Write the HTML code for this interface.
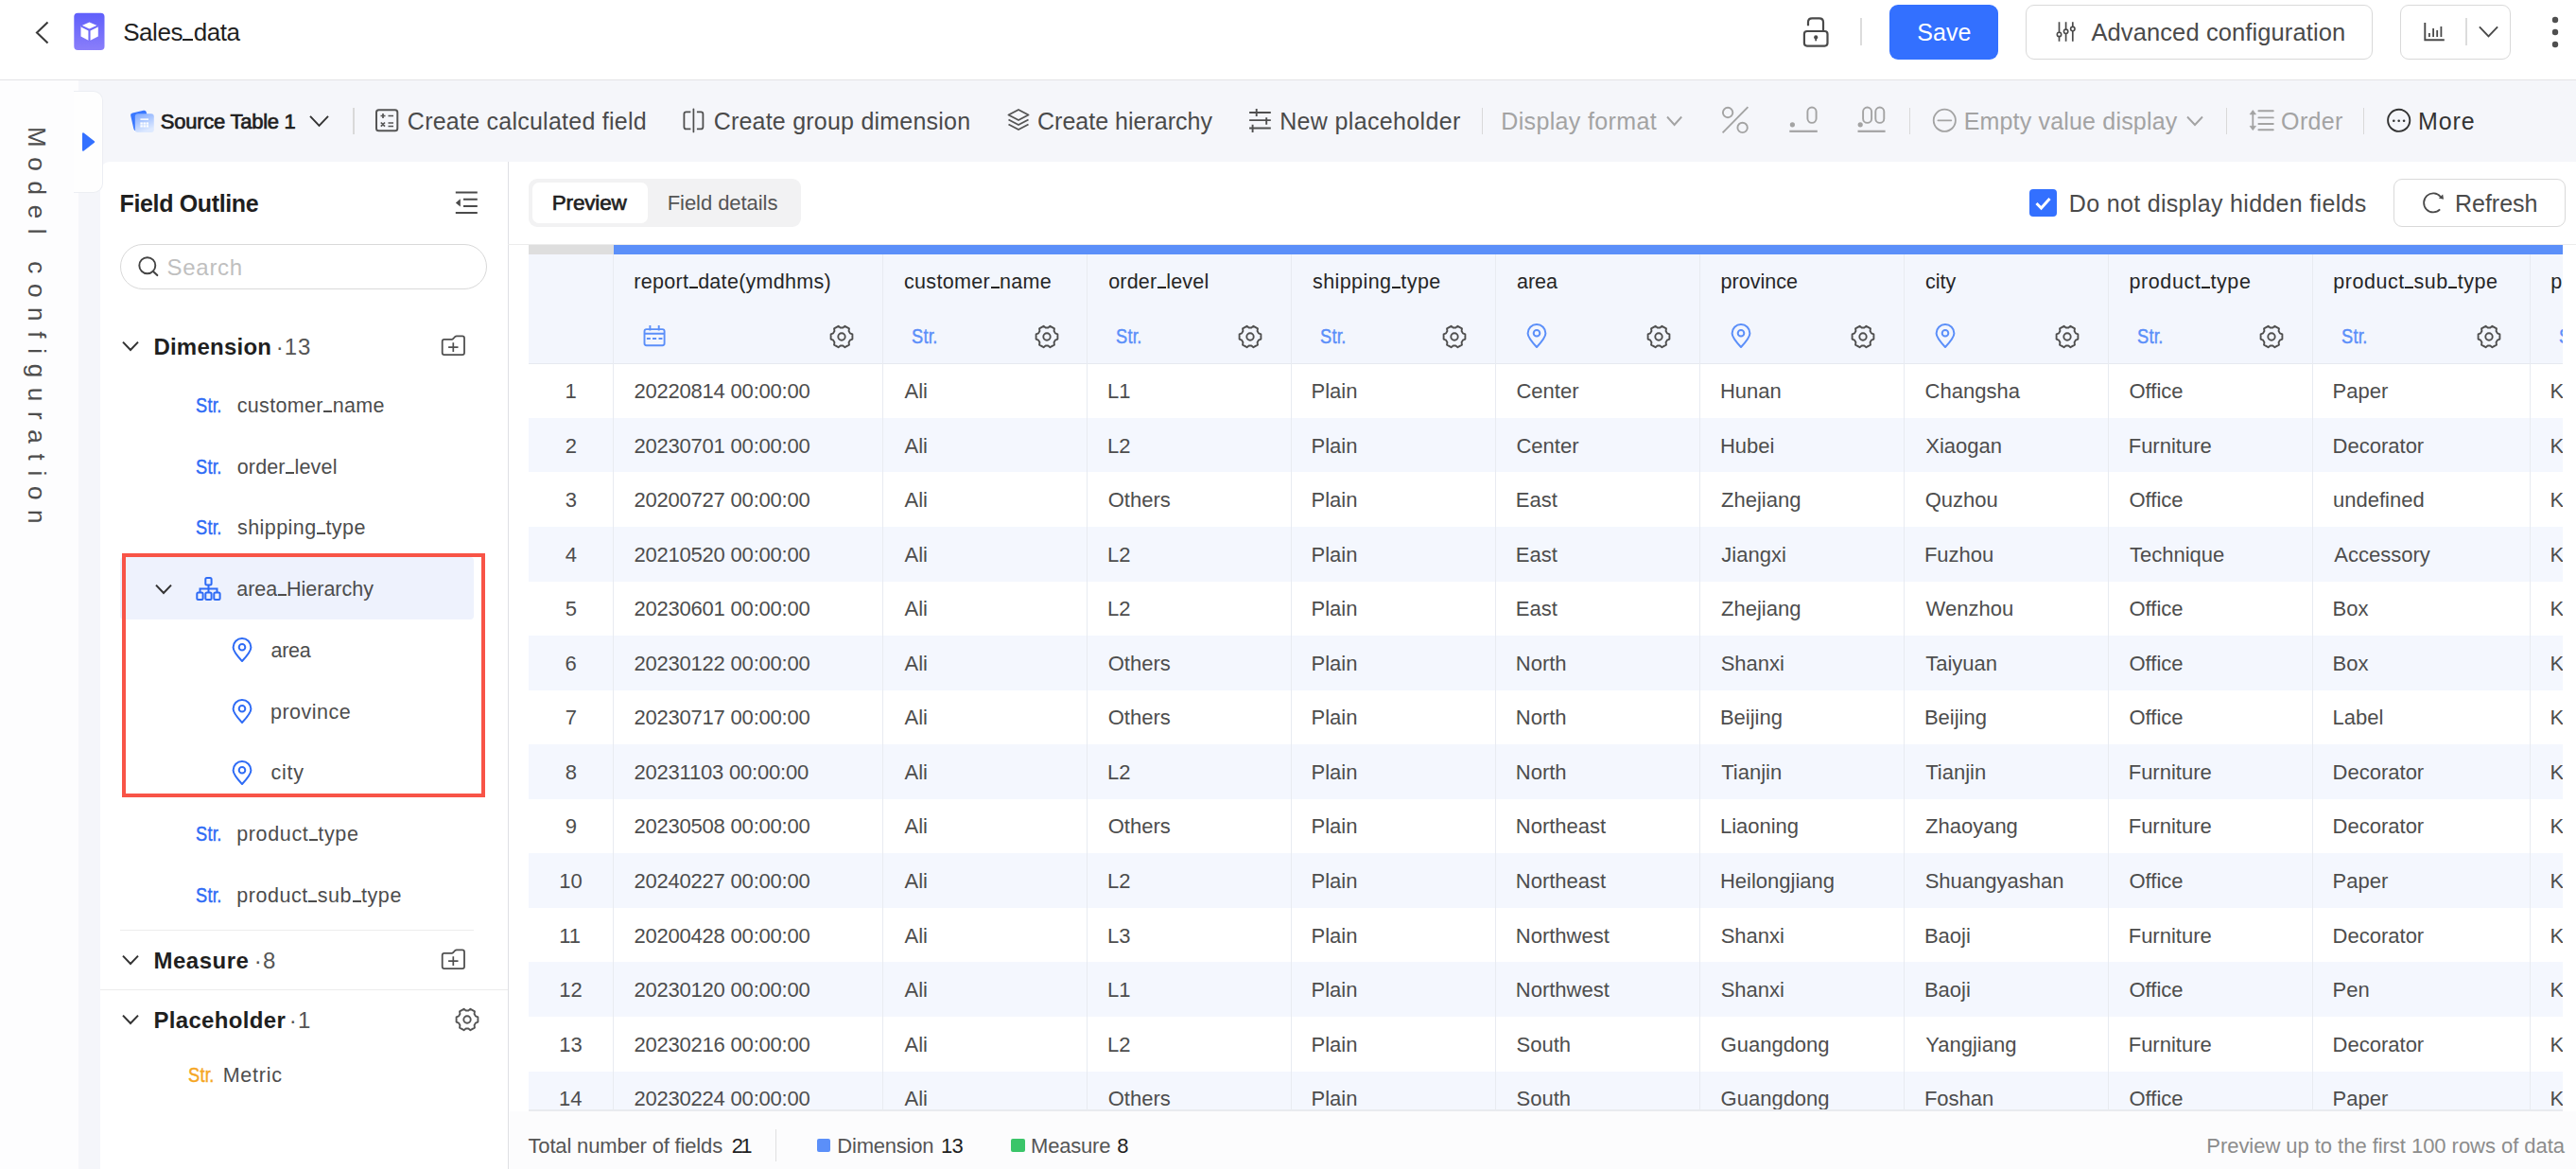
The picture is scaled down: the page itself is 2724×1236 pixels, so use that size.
<!DOCTYPE html>
<html><head><meta charset="utf-8"><style>
html,body{margin:0;padding:0}
body{width:2724px;height:1236px;position:relative;overflow:hidden;background:#fff;font-family:"Liberation Sans",sans-serif}
.a{position:absolute}
.t{position:absolute;white-space:nowrap;line-height:1;font-family:"Liberation Sans",sans-serif}
svg.a{overflow:visible}
.us{display:inline-block;width:0.42em;height:0.085em;background:currentColor;margin:0 0.02em}
</style></head><body>
<div class="a" style="left:0px;top:0px;width:2724px;height:84px;background:#ffffff"></div>
<div class="a" style="left:0px;top:84px;width:2724px;height:1px;background:#e3e3e6"></div>
<div class="a" style="left:0px;top:85px;width:83px;height:1151px;background:#fdfdfe"></div>
<div class="a" style="left:83px;top:85px;width:2641px;height:1151px;background:#f5f6fa"></div>
<div class="a" style="left:106px;top:171px;width:2618px;height:1065px;background:#ffffff;border-top-left-radius:10px"></div>
<div class="a" style="left:537px;top:171px;width:1px;height:1065px;background:#dfe0e4"></div>
<div class="a" style="left:78px;top:96px;width:31px;height:108px;background:#fefefe;border-radius:0 10px 10px 0;border:1px solid #eceef3;border-left:none;box-sizing:border-box"></div>
<svg class="a" style="left:30px;top:18px;" width="30" height="34" viewBox="0 0 30 34" fill="none"><polyline points="20.5,5.6 9,16.5 20.5,27.4" stroke="#3a3a3a" stroke-width="2.1" fill="none"/></svg>
<svg class="a" style="left:78px;top:13px" width="33" height="41" viewBox="0 0 33 41">
<defs><linearGradient id="lg" x1="0" y1="0" x2="0" y2="1"><stop offset="0" stop-color="#5f5ffb"/><stop offset="1" stop-color="#8a7efa"/></linearGradient></defs>
<rect x="0.3" y="0.7" width="32.2" height="39.3" rx="4" fill="url(#lg)"/>
<path d="M16.5 10.6 L25.8 14.4 L25.8 25.6 L16.5 30.3 L7.5 25.6 L7.5 14.4 Z" fill="#fff"/>
<path d="M7.6 14.4 L16.5 18.8 L25.7 14.4 M16.5 18.8 L16.5 30.5" stroke="#6f69f8" stroke-width="2.1" fill="none"/>
</svg>
<div class="t" style="left:130.22px;top:21px;font-size:26px;color:#1f1f1f;letter-spacing:-0.469px;">Sales<span class="us"></span>data</div>
<svg class="a" style="left:1900px;top:14px;" width="40" height="40" viewBox="0 0 40 40" fill="none"><rect x="7.9" y="19" width="24.6" height="15.6" rx="3" stroke="#4a4a4a" stroke-width="2.2"/><path d="M12 13.2 V9.6 Q12 5.4 16.2 5.4 H23.8 Q28 5.4 28 9.6 V19" stroke="#4a4a4a" stroke-width="2.2" fill="none"/><circle cx="20.2" cy="25.4" r="2.1" fill="#4a4a4a"/><rect x="19.3" y="25.5" width="1.8" height="3.8" fill="#4a4a4a"/></svg>
<div class="a" style="left:1967px;top:19px;width:2px;height:29px;background:#dcdcdc"></div>
<div class="a" style="left:1998px;top:5px;width:115px;height:58px;background:#3370ff;border-radius:9px"></div>
<div class="t" style="left:2027.16px;top:22px;font-size:25px;color:#ffffff;letter-spacing:0.121px;">Save</div>
<div class="a" style="left:2142px;top:5px;width:367px;height:58px;border:1.5px solid #d9d9d9;border-radius:9px;box-sizing:border-box;background:#fff"></div>
<svg class="a" style="left:2170px;top:18px;" width="30" height="30" viewBox="0 0 30 30" fill="none"><path d="M7.5 5.3 V25.8 M14.6 5.3 V25.8 M21.8 5.3 V25.8" stroke="#4a4a4a" stroke-width="1.7"/><circle cx="7.5" cy="18.4" r="2.2" fill="#fff" stroke="#4a4a4a" stroke-width="1.6"/><circle cx="14.6" cy="15.3" r="2.2" fill="#fff" stroke="#4a4a4a" stroke-width="1.6"/><circle cx="21.8" cy="12.6" r="2.2" fill="#fff" stroke="#4a4a4a" stroke-width="1.6"/></svg>
<div class="t" style="left:2211.45px;top:22px;font-size:25.5px;color:#4a4a4a;letter-spacing:0.104px;">Advanced configuration</div>
<div class="a" style="left:2538px;top:5px;width:117px;height:58px;border:1.5px solid #d9d9d9;border-radius:9px;box-sizing:border-box;background:#fff"></div>
<svg class="a" style="left:2560px;top:20px;" width="30" height="28" viewBox="0 0 30 28" fill="none"><path d="M4.3 4 V22.2 H24.8" stroke="#4a4a4a" stroke-width="1.9" fill="none"/><path d="M8.9 19 V15 M13.1 19 V10.1 M17.2 19 V12 M21.4 19 V7.9" stroke="#4a4a4a" stroke-width="1.8"/></svg>
<div class="a" style="left:2607px;top:19px;width:2px;height:29px;background:#dcdcdc"></div>
<svg class="a" style="left:2616px;top:22px;" width="30" height="24" viewBox="0 0 30 24" fill="none"><polyline points="5.9,6.3 15.5,16.3 25.1,6.3" stroke="#4a4a4a" stroke-width="1.9" fill="none"/></svg>
<svg class="a" style="left:2694px;top:14px;" width="16" height="42" viewBox="0 0 16 42" fill="none"><circle cx="8" cy="7" r="3.2" fill="#4f4f4f"/><circle cx="8" cy="20" r="3.2" fill="#4f4f4f"/><circle cx="8" cy="33" r="3.2" fill="#4f4f4f"/></svg>
<svg class="a" style="left:136px;top:113px" width="30" height="30" viewBox="0 0 30 30">
<defs><linearGradient id="sg" x1="0" y1="0" x2="0.4" y2="1"><stop offset="0" stop-color="#7ea8ff"/><stop offset="1" stop-color="#dde9ff"/></linearGradient></defs>
<rect x="3.6" y="5" width="17" height="19" rx="2.5" transform="rotate(-13 12 14.5)" fill="#3a78ff"/>
<rect x="6.8" y="7.2" width="20" height="19.8" rx="3" fill="url(#sg)"/>
<rect x="12.4" y="12.4" width="8.6" height="1.5" fill="#fff"/><rect x="12.4" y="16.4" width="2.4" height="2.2" fill="#fff"/><rect x="15.5" y="16.4" width="2.4" height="2.2" fill="#fff"/><rect x="18.6" y="16.4" width="2.4" height="2.2" fill="#fff"/><rect x="12.4" y="19.3" width="2.4" height="2.2" fill="#fff"/><rect x="15.5" y="19.3" width="2.4" height="2.2" fill="#fff"/><rect x="18.6" y="19.3" width="2.4" height="2.2" fill="#fff"/>
</svg>
<div class="t" style="left:169.80px;top:118px;font-size:22px;color:#1f1f1f;letter-spacing:-0.256px;-webkit-text-stroke:0.7px #1f1f1f">Source Table 1</div>
<svg class="a" style="left:322px;top:115px;" width="30" height="25" viewBox="0 0 30 25" fill="none"><polyline points="6,7.8 15.5,17.8 25,7.8" stroke="#333" stroke-width="1.9" fill="none"/></svg>
<div class="a" style="left:373px;top:114px;width:1.5px;height:28px;background:#d9d9d9"></div>
<svg class="a" style="left:395px;top:113px;" width="29" height="29" viewBox="0 0 29 29" fill="none"><rect x="3" y="3.3" width="22.3" height="22" rx="2.5" stroke="#555" stroke-width="2"/><path d="M7.5 9.5 H12.5 M10 7 V12 M15.5 9.5 H21 M7.8 16.5 L12 20.7 M12 16.5 L7.8 20.7 M15.5 17 H21 M15.5 20.5 H21" stroke="#555" stroke-width="1.7"/></svg>
<div class="t" style="left:430.83px;top:116px;font-size:25px;color:#4a4a4a;letter-spacing:0.246px;">Create calculated field</div>
<svg class="a" style="left:718px;top:112px;" width="30" height="30" viewBox="0 0 30 30" fill="none"><path d="M12.4 6.3 H7.6 Q5.4 6.3 5.4 8.5 V22.2 Q5.4 24.4 7.6 24.4 H12.4 M18.9 6.3 H23.2 Q25.4 6.3 25.4 8.5 V22.2 Q25.4 24.4 23.2 24.4 H18.9" stroke="#4f4f4f" stroke-width="1.8" fill="none"/><path d="M15.4 3.4 V27.5" stroke="#4f4f4f" stroke-width="1.7" stroke-linecap="round"/></svg>
<div class="t" style="left:754.63px;top:116px;font-size:25px;color:#4a4a4a;letter-spacing:0.222px;">Create group dimension</div>
<svg class="a" style="left:1062px;top:112px;" width="30" height="30" viewBox="0 0 30 30" fill="none"><path d="M15 4 L25.5 9.5 L15 15 L4.5 9.5 Z" stroke="#555" stroke-width="1.9" fill="none" stroke-linejoin="round"/><path d="M4.5 14.5 L15 20 L25.5 14.5 M4.5 19.5 L15 25 L25.5 19.5" stroke="#555" stroke-width="1.9" fill="none" stroke-linejoin="round"/></svg>
<div class="t" style="left:1097.03px;top:116px;font-size:25px;color:#4a4a4a;letter-spacing:0.008px;">Create hierarchy</div>
<svg class="a" style="left:1318px;top:112px;" width="30" height="30" viewBox="0 0 30 30" fill="none"><path d="M3.1 7 H25.8 M3.1 15.1 H25.8 M3.1 23.5 H25.8" stroke="#4f4f4f" stroke-width="1.9"/><path d="M10.7 2.9 V11 M21.2 12.2 V19.8 M6.6 19.8 V27.9" stroke="#4f4f4f" stroke-width="1.9"/></svg>
<div class="t" style="left:1353.15px;top:116px;font-size:25px;color:#4a4a4a;letter-spacing:0.353px;">New placeholder</div>
<div class="a" style="left:1566.5px;top:114px;width:1.5px;height:28px;background:#d9d9d9"></div>
<div class="t" style="left:1587.25px;top:116px;font-size:25px;color:#a3a3a3;letter-spacing:0.351px;">Display format</div>
<svg class="a" style="left:1758px;top:115px;" width="26" height="25" viewBox="0 0 26 25" fill="none"><polyline points="5,8.5 12.6,17 20.2,8.5" stroke="#a3a3a3" stroke-width="1.9" fill="none"/></svg>
<svg class="a" style="left:1816px;top:110px;" width="38" height="34" viewBox="0 0 38 34" fill="none"><circle cx="11.1" cy="9" r="5.2" stroke="#a3a3a3" stroke-width="1.9"/><circle cx="26.6" cy="24.9" r="5.2" stroke="#a3a3a3" stroke-width="1.9"/><path d="M5.6 30.3 L32.4 3.2" stroke="#a3a3a3" stroke-width="1.9"/></svg>
<svg class="a" style="left:1888px;top:115px;" width="38" height="29" viewBox="0 0 38 29" fill="none"><circle cx="7.4" cy="16.8" r="2.6" fill="#a3a3a3"/><rect x="23.4" y="-1.5" width="9.2" height="16.4" rx="4.6" stroke="#a3a3a3" stroke-width="1.9"/><path d="M4.3 23.8 H33.8" stroke="#a3a3a3" stroke-width="2.2"/></svg>
<svg class="a" style="left:1960px;top:115px;" width="38" height="29" viewBox="0 0 38 29" fill="none"><circle cx="7.2" cy="16.8" r="2.6" fill="#a3a3a3"/><rect x="10.1" y="-1.5" width="9" height="16.4" rx="4.5" stroke="#a3a3a3" stroke-width="1.9"/><rect x="23.3" y="-1.5" width="9" height="16.4" rx="4.5" stroke="#a3a3a3" stroke-width="1.9"/><path d="M4.5 23.8 H33.6" stroke="#a3a3a3" stroke-width="2.2"/></svg>
<div class="a" style="left:2018.5px;top:114px;width:1.5px;height:28px;background:#d9d9d9"></div>
<svg class="a" style="left:2040px;top:112px;" width="32" height="30" viewBox="0 0 32 30" fill="none"><circle cx="16.3" cy="15.3" r="11.6" stroke="#a3a3a3" stroke-width="1.8"/><path d="M9.4 15.3 H23.3" stroke="#a3a3a3" stroke-width="1.8" stroke-linecap="round"/></svg>
<div class="t" style="left:2076.65px;top:116px;font-size:25px;color:#a3a3a3;letter-spacing:0.182px;">Empty value display</div>
<svg class="a" style="left:2308px;top:115px;" width="26" height="25" viewBox="0 0 26 25" fill="none"><polyline points="5,8.5 13,17 21,8.5" stroke="#a3a3a3" stroke-width="1.9" fill="none"/></svg>
<div class="a" style="left:2353.8px;top:114px;width:1.5px;height:28px;background:#d9d9d9"></div>
<svg class="a" style="left:2375px;top:112px;" width="33" height="30" viewBox="0 0 33 30" fill="none"><path d="M7.3 8 V22" stroke="#a3a3a3" stroke-width="1.8"/><path d="M7.3 4.5 L4 8.9 H10.6 Z M7.3 25.7 L4 21.3 H10.6 Z" fill="#a3a3a3" stroke="#a3a3a3" stroke-width="0.6" stroke-linejoin="round"/><path d="M13.4 5.3 H28.8 M13.4 12.4 H28.8 M13.4 19 H28.8 M13.4 25.3 H28.8" stroke="#a3a3a3" stroke-width="1.9" stroke-linecap="round"/></svg>
<div class="t" style="left:2412.12px;top:116px;font-size:25px;color:#a3a3a3;letter-spacing:0.324px;">Order</div>
<div class="a" style="left:2498.8px;top:114px;width:1.5px;height:28px;background:#d9d9d9"></div>
<svg class="a" style="left:2521px;top:112px;" width="32" height="30" viewBox="0 0 32 30" fill="none"><circle cx="15.7" cy="15.3" r="11.6" stroke="#333" stroke-width="1.9"/><circle cx="10.3" cy="15.8" r="1.3" fill="#333"/><circle cx="15.7" cy="15.8" r="1.3" fill="#333"/><circle cx="21.1" cy="15.8" r="1.3" fill="#333"/></svg>
<div class="t" style="left:2557.05px;top:116px;font-size:25px;color:#333333;letter-spacing:0.868px;">More</div>
<svg class="a" style="left:84px;top:138px;" width="20" height="24" viewBox="0 0 20 24" fill="none"><path d="M4 3.2 L15.2 12 L4 20.8 Z" fill="#3370ff" stroke="#3370ff" stroke-width="2" stroke-linejoin="round"/></svg>
<div class="t" style="left:51.5px;top:133.7px;font-size:26px;color:#4d4d4d;letter-spacing:10.7px;transform:rotate(90deg);transform-origin:0 0">Model configuration</div>
<div class="t" style="left:126.53px;top:203px;font-size:25px;color:#1f1f1f;font-weight:700;letter-spacing:-0.355px;">Field Outline</div>
<svg class="a" style="left:478px;top:199px;" width="30" height="30" viewBox="0 0 30 30" fill="none"><path d="M3.8 4.6 H26.8 M12 11.8 H26.8 M12 19 H26.8 M3.8 26 H26.8" stroke="#4a4a4a" stroke-width="2"/><path d="M3.9 15.4 L8.8 11.2 V19.6 Z" fill="#4a4a4a"/></svg>
<div class="a" style="left:127px;top:258px;width:388px;height:48px;border:1.5px solid #d9d9d9;border-radius:24px;box-sizing:border-box;background:#fff"></div>
<svg class="a" style="left:143px;top:269px;" width="28" height="26" viewBox="0 0 28 26" fill="none"><circle cx="12.8" cy="11.7" r="8.5" stroke="#444" stroke-width="1.9"/><path d="M19 18 L23.3 22.1" stroke="#444" stroke-width="2.1" stroke-linecap="round"/></svg>
<div class="t" style="left:176.61px;top:271px;font-size:24px;color:#bfbfbf;letter-spacing:0.701px;">Search</div>
<svg class="a" style="left:122.5px;top:354px;" width="30.0" height="24" viewBox="0 0 30.0 24" fill="none"><polyline points="7,7.6 15,16 23,7.6" stroke="#333" stroke-width="2" fill="none"/></svg>
<div class="t" style="left:162.39px;top:355px;font-size:24px;color:#1f1f1f;font-weight:700;letter-spacing:0.239px;">Dimension</div>
<div class="t" style="left:291.65px;top:355px;font-size:24px;color:#555555;letter-spacing:1.057px;">·13</div>
<svg class="a" style="left:465px;top:353px;" width="30" height="26" viewBox="0 0 30 26" fill="none"><path d="M2.7 8 Q2.7 5.9 4.8 5.9 H12.8 Q13.6 5.9 14.2 5.2 L16.2 3 Q16.9 2.3 17.8 2.3 H23.9 Q26 2.3 26 4.4 V20 Q26 22.1 23.9 22.1 H4.8 Q2.7 22.1 2.7 20 Z" stroke="#4f4f4f" stroke-width="1.8" fill="none"/><path d="M9.1 14.1 H19.5 M14.3 9.2 V19" stroke="#4f4f4f" stroke-width="1.7"/></svg>
<div class="t" style="left:206.82px;top:419px;font-size:21.5px;color:#2e6bf5;letter-spacing:0.300px;-webkit-text-stroke:0.4px #2e6bf5;transform:scaleX(0.85);transform-origin:0 0">Str<span style="margin-left:-2.2px">.</span></div>
<div class="t" style="left:250.69px;top:419px;font-size:21.5px;color:#4d4d4d;letter-spacing:0.332px;">customer<span class="us"></span>name</div>
<div class="t" style="left:206.82px;top:484px;font-size:21.5px;color:#2e6bf5;letter-spacing:0.300px;-webkit-text-stroke:0.4px #2e6bf5;transform:scaleX(0.85);transform-origin:0 0">Str<span style="margin-left:-2.2px">.</span></div>
<div class="t" style="left:250.70px;top:484px;font-size:21.5px;color:#4d4d4d;letter-spacing:0.164px;">order<span class="us"></span>level</div>
<div class="t" style="left:206.82px;top:548px;font-size:21.5px;color:#2e6bf5;letter-spacing:0.300px;-webkit-text-stroke:0.4px #2e6bf5;transform:scaleX(0.85);transform-origin:0 0">Str<span style="margin-left:-2.2px">.</span></div>
<div class="t" style="left:251.00px;top:548px;font-size:21.5px;color:#4d4d4d;letter-spacing:0.436px;">shipping<span class="us"></span>type</div>
<div class="a" style="left:127px;top:589px;width:374px;height:66px;background:#eef2fd;border-radius:4px"></div>
<svg class="a" style="left:158px;top:611px;" width="30" height="24" viewBox="0 0 30 24" fill="none"><polyline points="7,7.6 15,16 23,7.6" stroke="#333" stroke-width="2" fill="none"/></svg>
<svg class="a" style="left:204px;top:607px;" width="33" height="30" viewBox="0 0 33 30" fill="none"><rect x="13.3" y="4" width="6.3" height="7.5" rx="1.5" stroke="#2e6bf5" stroke-width="2"/><rect x="4.3" y="19.5" width="6.3" height="7.5" rx="1.5" stroke="#2e6bf5" stroke-width="2"/><rect x="13.3" y="19.5" width="6.3" height="7.5" rx="1.5" stroke="#2e6bf5" stroke-width="2"/><rect x="22.3" y="19.5" width="6.3" height="7.5" rx="1.5" stroke="#2e6bf5" stroke-width="2"/><path d="M16.5 11.5 V19.5 M7.5 19.5 V15.5 H25.5 V19.5" stroke="#2e6bf5" stroke-width="2" fill="none"/></svg>
<div class="t" style="left:250.29px;top:613px;font-size:21.5px;color:#4d4d4d;letter-spacing:-0.020px;">area<span class="us"></span>Hierarchy</div>
<svg class="a" style="left:244.2px;top:673px;" width="24.0" height="28" viewBox="0 0 24.0 28" fill="none"><path d="M12 26 C6.3 19.8 2.6 15.5 2.6 11.4 A9.4 9.4 0 0 1 21.4 11.4 C21.4 15.5 17.7 19.8 12 26 Z" stroke="#2e6bf5" stroke-width="2" fill="none" stroke-linejoin="round"/><circle cx="12" cy="11.2" r="3.3" stroke="#2e6bf5" stroke-width="2"/></svg>
<div class="t" style="left:286.49px;top:678px;font-size:21.5px;color:#4d4d4d;letter-spacing:-0.306px;">area</div>
<svg class="a" style="left:244.2px;top:738px;" width="24.0" height="28" viewBox="0 0 24.0 28" fill="none"><path d="M12 26 C6.3 19.8 2.6 15.5 2.6 11.4 A9.4 9.4 0 0 1 21.4 11.4 C21.4 15.5 17.7 19.8 12 26 Z" stroke="#2e6bf5" stroke-width="2" fill="none" stroke-linejoin="round"/><circle cx="12" cy="11.2" r="3.3" stroke="#2e6bf5" stroke-width="2"/></svg>
<div class="t" style="left:286.01px;top:743px;font-size:21.5px;color:#4d4d4d;letter-spacing:0.497px;">province</div>
<svg class="a" style="left:244.2px;top:803px;" width="24.0" height="28" viewBox="0 0 24.0 28" fill="none"><path d="M12 26 C6.3 19.8 2.6 15.5 2.6 11.4 A9.4 9.4 0 0 1 21.4 11.4 C21.4 15.5 17.7 19.8 12 26 Z" stroke="#2e6bf5" stroke-width="2" fill="none" stroke-linejoin="round"/><circle cx="12" cy="11.2" r="3.3" stroke="#2e6bf5" stroke-width="2"/></svg>
<div class="t" style="left:286.49px;top:807px;font-size:21.5px;color:#4d4d4d;letter-spacing:0.735px;">city</div>
<div class="a" style="left:129px;top:585px;width:384px;height:258px;border:4px solid #f85447;box-sizing:border-box"></div>
<div class="t" style="left:206.82px;top:872px;font-size:21.5px;color:#2e6bf5;letter-spacing:0.300px;-webkit-text-stroke:0.4px #2e6bf5;transform:scaleX(0.85);transform-origin:0 0">Str<span style="margin-left:-2.2px">.</span></div>
<div class="t" style="left:250.21px;top:872px;font-size:21.5px;color:#4d4d4d;letter-spacing:0.646px;">product<span class="us"></span>type</div>
<div class="t" style="left:206.82px;top:937px;font-size:21.5px;color:#2e6bf5;letter-spacing:0.300px;-webkit-text-stroke:0.4px #2e6bf5;transform:scaleX(0.85);transform-origin:0 0">Str<span style="margin-left:-2.2px">.</span></div>
<div class="t" style="left:250.21px;top:937px;font-size:21.5px;color:#4d4d4d;letter-spacing:0.570px;">product<span class="us"></span>sub<span class="us"></span>type</div>
<div class="a" style="left:127px;top:983px;width:374px;height:1px;background:#ececec"></div>
<svg class="a" style="left:122.5px;top:1003px;" width="30.0" height="24" viewBox="0 0 30.0 24" fill="none"><polyline points="7,7.6 15,16 23,7.6" stroke="#333" stroke-width="2" fill="none"/></svg>
<div class="t" style="left:162.39px;top:1004px;font-size:24px;color:#1f1f1f;font-weight:700;letter-spacing:0.524px;">Measure</div>
<div class="t" style="left:268.65px;top:1004px;font-size:24px;color:#555555;letter-spacing:1.451px;">·8</div>
<svg class="a" style="left:465px;top:1002px;" width="30" height="26" viewBox="0 0 30 26" fill="none"><path d="M2.7 8 Q2.7 5.9 4.8 5.9 H12.8 Q13.6 5.9 14.2 5.2 L16.2 3 Q16.9 2.3 17.8 2.3 H23.9 Q26 2.3 26 4.4 V20 Q26 22.1 23.9 22.1 H4.8 Q2.7 22.1 2.7 20 Z" stroke="#4f4f4f" stroke-width="1.8" fill="none"/><path d="M9.1 14.1 H19.5 M14.3 9.2 V19" stroke="#4f4f4f" stroke-width="1.7"/></svg>
<div class="a" style="left:106px;top:1045.5px;width:431px;height:1.0px;background:#ececec"></div>
<svg class="a" style="left:122.5px;top:1066px;" width="30.0" height="24" viewBox="0 0 30.0 24" fill="none"><polyline points="7,7.6 15,16 23,7.6" stroke="#333" stroke-width="2" fill="none"/></svg>
<div class="t" style="left:162.39px;top:1067px;font-size:24px;color:#1f1f1f;font-weight:700;letter-spacing:0.331px;">Placeholder</div>
<div class="t" style="left:305.65px;top:1067px;font-size:24px;color:#555555;letter-spacing:1.280px;">·1</div>
<svg class="a" style="left:481.5px;top:1065.6px" width="24" height="24" viewBox="0 0 24 24" fill="none"><path d="M20.90 8.40 L23.40 9.40 L23.40 14.60 L20.90 15.60 L19.57 17.91 L19.95 20.57 L15.45 23.17 L13.33 21.51 L10.67 21.51 L8.55 23.17 L4.05 20.57 L4.43 17.91 L3.10 15.60 L0.60 14.60 L0.60 9.40 L3.10 8.40 L4.43 6.09 L4.05 3.43 L8.55 0.83 L10.67 2.49 L13.33 2.49 L15.45 0.83 L19.95 3.43 L19.57 6.09 Z" stroke="#555" stroke-width="1.9" stroke-linejoin="round" fill="none"/><circle cx="12" cy="12" r="3.7" stroke="#555" stroke-width="1.9"/></svg>
<div class="t" style="left:199.42px;top:1127px;font-size:21.5px;color:#f5a623;letter-spacing:0.300px;-webkit-text-stroke:0.4px #f5a623;transform:scaleX(0.85);transform-origin:0 0">Str<span style="margin-left:-2.2px">.</span></div>
<div class="t" style="left:235.64px;top:1127px;font-size:21.5px;color:#4d4d4d;letter-spacing:0.781px;">Metric</div>
<div class="a" style="left:559px;top:189px;width:288px;height:51px;background:#f2f2f3;border-radius:9px"></div>
<div class="a" style="left:563px;top:193px;width:122px;height:43px;background:#ffffff;border-radius:7px"></div>
<div class="t" style="left:583.75px;top:204px;font-size:22.5px;color:#1f1f1f;letter-spacing:-0.172px;-webkit-text-stroke:0.7px #1f1f1f">Preview</div>
<div class="t" style="left:705.70px;top:204px;font-size:22px;color:#555555;letter-spacing:-0.058px;">Field details</div>
<div class="a" style="left:2146px;top:200px;width:29px;height:29px;background:#3370ff;border-radius:4px"></div>
<svg class="a" style="left:2146px;top:200px;" width="29" height="29" viewBox="0 0 29 29" fill="none"><polyline points="7.5,15 12.5,20 21.5,10" stroke="#fff" stroke-width="3" fill="none"/></svg>
<div class="t" style="left:2187.85px;top:203px;font-size:25px;color:#4a4a4a;letter-spacing:0.322px;">Do not display hidden fields</div>
<div class="a" style="left:2531px;top:189px;width:182px;height:51px;border:1.5px solid #d9d9d9;border-radius:9px;box-sizing:border-box;background:#fff"></div>
<svg class="a" style="left:2558px;top:201px;" width="30" height="28" viewBox="0 0 30 28" fill="none"><path d="M22.76 6.97 A10 10 0 1 0 22.17 20.47" stroke="#4a4a4a" stroke-width="1.8" fill="none"/><path d="M20.8 8.6 L26 9.8 L25.2 4.4 Z" fill="#4a4a4a"/></svg>
<div class="t" style="left:2595.95px;top:203px;font-size:25px;color:#4a4a4a;letter-spacing:0.006px;">Refresh</div>
<div class="a" style="left:537px;top:258px;width:2187px;height:1px;background:#ececec"></div>
<div class="a" style="left:559px;top:259px;width:90px;height:10px;background:#dedede"></div>
<div class="a" style="left:649px;top:259px;width:2061px;height:10px;background:#5b8ff9"></div>
<div class="a" style="left:559px;top:269px;width:2151px;height:115px;background:#f3f6fd"></div>
<div class="a" style="left:559px;top:269px;width:2151px;height:905px;overflow:hidden">
<div class="a" style="left:0.00px;top:172.95px;width:2151.00px;height:57.55px;background:#f4f7fe"></div>
<div class="a" style="left:0.00px;top:288.05px;width:2151.00px;height:57.55px;background:#f4f7fe"></div>
<div class="a" style="left:0.00px;top:403.15px;width:2151.00px;height:57.55px;background:#f4f7fe"></div>
<div class="a" style="left:0.00px;top:518.25px;width:2151.00px;height:57.55px;background:#f4f7fe"></div>
<div class="a" style="left:0.00px;top:633.35px;width:2151.00px;height:57.55px;background:#f4f7fe"></div>
<div class="a" style="left:0.00px;top:748.45px;width:2151.00px;height:57.55px;background:#f4f7fe"></div>
<div class="a" style="left:0.00px;top:863.55px;width:2151.00px;height:57.55px;background:#f4f7fe"></div>
<div class="a" style="left:0.00px;top:115.00px;width:2151.00px;height:1.00px;background:#e6e9f0"></div>
<div class="a" style="left:88.80px;top:0.00px;width:1.00px;height:905.00px;background:#e8ebf1"></div>
<div class="a" style="left:373.80px;top:0.00px;width:1.00px;height:905.00px;background:#e8ebf1"></div>
<div class="a" style="left:590.10px;top:0.00px;width:1.00px;height:905.00px;background:#e8ebf1"></div>
<div class="a" style="left:805.60px;top:0.00px;width:1.00px;height:905.00px;background:#e8ebf1"></div>
<div class="a" style="left:1021.90px;top:0.00px;width:1.00px;height:905.00px;background:#e8ebf1"></div>
<div class="a" style="left:1238.00px;top:0.00px;width:1.00px;height:905.00px;background:#e8ebf1"></div>
<div class="a" style="left:1454.00px;top:0.00px;width:1.00px;height:905.00px;background:#e8ebf1"></div>
<div class="a" style="left:1669.80px;top:0.00px;width:1.00px;height:905.00px;background:#e8ebf1"></div>
<div class="a" style="left:1885.70px;top:0.00px;width:1.00px;height:905.00px;background:#e8ebf1"></div>
<div class="a" style="left:2115.60px;top:0.00px;width:1.00px;height:905.00px;background:#e8ebf1"></div>
<div class="t" style="left:111.37px;top:19px;font-size:21.5px;color:#262626;letter-spacing:0.289px;">report<span class="us"></span>date(ymdhms)</div>
<svg class="a" style="left:120.3px;top:72px" width="26" height="28" viewBox="0 0 26 28" fill="none"><rect x="2.5" y="7.1" width="21.1" height="17.2" rx="2.2" stroke="#5b8ff9" stroke-width="1.9"/><path d="M2.5 11.8 H23.6 M8.4 3 V8.6 M17.7 3 V8.6 M4.9 17 H8.8 M11 17 H15.1 M17.5 17 H21.4" stroke="#5b8ff9" stroke-width="1.9"/></svg>
<svg class="a" style="left:319.2px;top:74.5px" width="24" height="24" viewBox="0 0 24 24" fill="none"><path d="M20.90 8.40 L23.40 9.40 L23.40 14.60 L20.90 15.60 L19.57 17.91 L19.95 20.57 L15.45 23.17 L13.33 21.51 L10.67 21.51 L8.55 23.17 L4.05 20.57 L4.43 17.91 L3.10 15.60 L0.60 14.60 L0.60 9.40 L3.10 8.40 L4.43 6.09 L4.05 3.43 L8.55 0.83 L10.67 2.49 L13.33 2.49 L15.45 0.83 L19.95 3.43 L19.57 6.09 Z" stroke="#4f4f4f" stroke-width="1.9" stroke-linejoin="round" fill="none"/><circle cx="12" cy="12" r="3.7" stroke="#4f4f4f" stroke-width="1.9"/></svg>
<div class="t" style="left:396.89px;top:19px;font-size:21.5px;color:#262626;letter-spacing:0.349px;">customer<span class="us"></span>name</div>
<div class="t" style="left:404.92px;top:77px;font-size:21.5px;color:#5b8ff9;letter-spacing:0.300px;-webkit-text-stroke:0.4px #5b8ff9;transform:scaleX(0.85);transform-origin:0 0">Str<span style="margin-left:-2.2px">.</span></div>
<svg class="a" style="left:535.5px;top:74.5px" width="24" height="24" viewBox="0 0 24 24" fill="none"><path d="M20.90 8.40 L23.40 9.40 L23.40 14.60 L20.90 15.60 L19.57 17.91 L19.95 20.57 L15.45 23.17 L13.33 21.51 L10.67 21.51 L8.55 23.17 L4.05 20.57 L4.43 17.91 L3.10 15.60 L0.60 14.60 L0.60 9.40 L3.10 8.40 L4.43 6.09 L4.05 3.43 L8.55 0.83 L10.67 2.49 L13.33 2.49 L15.45 0.83 L19.95 3.43 L19.57 6.09 Z" stroke="#4f4f4f" stroke-width="1.9" stroke-linejoin="round" fill="none"/><circle cx="12" cy="12" r="3.7" stroke="#4f4f4f" stroke-width="1.9"/></svg>
<div class="t" style="left:613.20px;top:19px;font-size:21.5px;color:#262626;letter-spacing:0.194px;">order<span class="us"></span>level</div>
<div class="t" style="left:621.22px;top:77px;font-size:21.5px;color:#5b8ff9;letter-spacing:0.300px;-webkit-text-stroke:0.4px #5b8ff9;transform:scaleX(0.85);transform-origin:0 0">Str<span style="margin-left:-2.2px">.</span></div>
<svg class="a" style="left:751.0px;top:74.5px" width="24" height="24" viewBox="0 0 24 24" fill="none"><path d="M20.90 8.40 L23.40 9.40 L23.40 14.60 L20.90 15.60 L19.57 17.91 L19.95 20.57 L15.45 23.17 L13.33 21.51 L10.67 21.51 L8.55 23.17 L4.05 20.57 L4.43 17.91 L3.10 15.60 L0.60 14.60 L0.60 9.40 L3.10 8.40 L4.43 6.09 L4.05 3.43 L8.55 0.83 L10.67 2.49 L13.33 2.49 L15.45 0.83 L19.95 3.43 L19.57 6.09 Z" stroke="#4f4f4f" stroke-width="1.9" stroke-linejoin="round" fill="none"/><circle cx="12" cy="12" r="3.7" stroke="#4f4f4f" stroke-width="1.9"/></svg>
<div class="t" style="left:829.00px;top:19px;font-size:21.5px;color:#262626;letter-spacing:0.420px;">shipping<span class="us"></span>type</div>
<div class="t" style="left:836.72px;top:77px;font-size:21.5px;color:#5b8ff9;letter-spacing:0.300px;-webkit-text-stroke:0.4px #5b8ff9;transform:scaleX(0.85);transform-origin:0 0">Str<span style="margin-left:-2.2px">.</span></div>
<svg class="a" style="left:967.3px;top:74.5px" width="24" height="24" viewBox="0 0 24 24" fill="none"><path d="M20.90 8.40 L23.40 9.40 L23.40 14.60 L20.90 15.60 L19.57 17.91 L19.95 20.57 L15.45 23.17 L13.33 21.51 L10.67 21.51 L8.55 23.17 L4.05 20.57 L4.43 17.91 L3.10 15.60 L0.60 14.60 L0.60 9.40 L3.10 8.40 L4.43 6.09 L4.05 3.43 L8.55 0.83 L10.67 2.49 L13.33 2.49 L15.45 0.83 L19.95 3.43 L19.57 6.09 Z" stroke="#4f4f4f" stroke-width="1.9" stroke-linejoin="round" fill="none"/><circle cx="12" cy="12" r="3.7" stroke="#4f4f4f" stroke-width="1.9"/></svg>
<div class="t" style="left:1044.99px;top:19px;font-size:21.5px;color:#262626;letter-spacing:0.000px;">area</div>
<svg class="a" style="left:1053.9px;top:72px" width="24" height="28" viewBox="0 0 24 28" fill="none"><path d="M12 26 C6.3 19.8 2.6 15.5 2.6 11.4 A9.4 9.4 0 0 1 21.4 11.4 C21.4 15.5 17.7 19.8 12 26 Z" stroke="#5b8ff9" stroke-width="2" stroke-linejoin="round"/><circle cx="12" cy="11.2" r="3.3" stroke="#5b8ff9" stroke-width="2"/></svg>
<svg class="a" style="left:1183.4px;top:74.5px" width="24" height="24" viewBox="0 0 24 24" fill="none"><path d="M20.90 8.40 L23.40 9.40 L23.40 14.60 L20.90 15.60 L19.57 17.91 L19.95 20.57 L15.45 23.17 L13.33 21.51 L10.67 21.51 L8.55 23.17 L4.05 20.57 L4.43 17.91 L3.10 15.60 L0.60 14.60 L0.60 9.40 L3.10 8.40 L4.43 6.09 L4.05 3.43 L8.55 0.83 L10.67 2.49 L13.33 2.49 L15.45 0.83 L19.95 3.43 L19.57 6.09 Z" stroke="#4f4f4f" stroke-width="1.9" stroke-linejoin="round" fill="none"/><circle cx="12" cy="12" r="3.7" stroke="#4f4f4f" stroke-width="1.9"/></svg>
<div class="t" style="left:1260.61px;top:19px;font-size:21.5px;color:#262626;letter-spacing:0.000px;">province</div>
<svg class="a" style="left:1270.0px;top:72px" width="24" height="28" viewBox="0 0 24 28" fill="none"><path d="M12 26 C6.3 19.8 2.6 15.5 2.6 11.4 A9.4 9.4 0 0 1 21.4 11.4 C21.4 15.5 17.7 19.8 12 26 Z" stroke="#5b8ff9" stroke-width="2" stroke-linejoin="round"/><circle cx="12" cy="11.2" r="3.3" stroke="#5b8ff9" stroke-width="2"/></svg>
<svg class="a" style="left:1399.4px;top:74.5px" width="24" height="24" viewBox="0 0 24 24" fill="none"><path d="M20.90 8.40 L23.40 9.40 L23.40 14.60 L20.90 15.60 L19.57 17.91 L19.95 20.57 L15.45 23.17 L13.33 21.51 L10.67 21.51 L8.55 23.17 L4.05 20.57 L4.43 17.91 L3.10 15.60 L0.60 14.60 L0.60 9.40 L3.10 8.40 L4.43 6.09 L4.05 3.43 L8.55 0.83 L10.67 2.49 L13.33 2.49 L15.45 0.83 L19.95 3.43 L19.57 6.09 Z" stroke="#4f4f4f" stroke-width="1.9" stroke-linejoin="round" fill="none"/><circle cx="12" cy="12" r="3.7" stroke="#4f4f4f" stroke-width="1.9"/></svg>
<div class="t" style="left:1477.09px;top:19px;font-size:21.5px;color:#262626;letter-spacing:0.000px;">city</div>
<svg class="a" style="left:1486.0px;top:72px" width="24" height="28" viewBox="0 0 24 28" fill="none"><path d="M12 26 C6.3 19.8 2.6 15.5 2.6 11.4 A9.4 9.4 0 0 1 21.4 11.4 C21.4 15.5 17.7 19.8 12 26 Z" stroke="#5b8ff9" stroke-width="2" stroke-linejoin="round"/><circle cx="12" cy="11.2" r="3.3" stroke="#5b8ff9" stroke-width="2"/></svg>
<svg class="a" style="left:1615.2px;top:74.5px" width="24" height="24" viewBox="0 0 24 24" fill="none"><path d="M20.90 8.40 L23.40 9.40 L23.40 14.60 L20.90 15.60 L19.57 17.91 L19.95 20.57 L15.45 23.17 L13.33 21.51 L10.67 21.51 L8.55 23.17 L4.05 20.57 L4.43 17.91 L3.10 15.60 L0.60 14.60 L0.60 9.40 L3.10 8.40 L4.43 6.09 L4.05 3.43 L8.55 0.83 L10.67 2.49 L13.33 2.49 L15.45 0.83 L19.95 3.43 L19.57 6.09 Z" stroke="#4f4f4f" stroke-width="1.9" stroke-linejoin="round" fill="none"/><circle cx="12" cy="12" r="3.7" stroke="#4f4f4f" stroke-width="1.9"/></svg>
<div class="t" style="left:1692.41px;top:19px;font-size:21.5px;color:#262626;letter-spacing:0.627px;">product<span class="us"></span>type</div>
<div class="t" style="left:1700.92px;top:77px;font-size:21.5px;color:#5b8ff9;letter-spacing:0.300px;-webkit-text-stroke:0.4px #5b8ff9;transform:scaleX(0.85);transform-origin:0 0">Str<span style="margin-left:-2.2px">.</span></div>
<svg class="a" style="left:1831.1px;top:74.5px" width="24" height="24" viewBox="0 0 24 24" fill="none"><path d="M20.90 8.40 L23.40 9.40 L23.40 14.60 L20.90 15.60 L19.57 17.91 L19.95 20.57 L15.45 23.17 L13.33 21.51 L10.67 21.51 L8.55 23.17 L4.05 20.57 L4.43 17.91 L3.10 15.60 L0.60 14.60 L0.60 9.40 L3.10 8.40 L4.43 6.09 L4.05 3.43 L8.55 0.83 L10.67 2.49 L13.33 2.49 L15.45 0.83 L19.95 3.43 L19.57 6.09 Z" stroke="#4f4f4f" stroke-width="1.9" stroke-linejoin="round" fill="none"/><circle cx="12" cy="12" r="3.7" stroke="#4f4f4f" stroke-width="1.9"/></svg>
<div class="t" style="left:1908.31px;top:19px;font-size:21.5px;color:#262626;letter-spacing:0.530px;">product<span class="us"></span>sub<span class="us"></span>type</div>
<div class="t" style="left:1916.82px;top:77px;font-size:21.5px;color:#5b8ff9;letter-spacing:0.300px;-webkit-text-stroke:0.4px #5b8ff9;transform:scaleX(0.85);transform-origin:0 0">Str<span style="margin-left:-2.2px">.</span></div>
<svg class="a" style="left:2061.0px;top:74.5px" width="24" height="24" viewBox="0 0 24 24" fill="none"><path d="M20.90 8.40 L23.40 9.40 L23.40 14.60 L20.90 15.60 L19.57 17.91 L19.95 20.57 L15.45 23.17 L13.33 21.51 L10.67 21.51 L8.55 23.17 L4.05 20.57 L4.43 17.91 L3.10 15.60 L0.60 14.60 L0.60 9.40 L3.10 8.40 L4.43 6.09 L4.05 3.43 L8.55 0.83 L10.67 2.49 L13.33 2.49 L15.45 0.83 L19.95 3.43 L19.57 6.09 Z" stroke="#4f4f4f" stroke-width="1.9" stroke-linejoin="round" fill="none"/><circle cx="12" cy="12" r="3.7" stroke="#4f4f4f" stroke-width="1.9"/></svg>
<div class="t" style="left:2138.21px;top:19px;font-size:21.5px;color:#262626;letter-spacing:0.000px;">p</div>
<div class="t" style="left:2146.72px;top:77px;font-size:21.5px;color:#5b8ff9;letter-spacing:0.300px;-webkit-text-stroke:0.4px #5b8ff9;transform:scaleX(0.85);transform-origin:0 0">Str<span style="margin-left:-2.2px">.</span></div>
<svg class="a" style="left:2276.9px;top:74.5px" width="24" height="24" viewBox="0 0 24 24" fill="none"><path d="M20.90 8.40 L23.40 9.40 L23.40 14.60 L20.90 15.60 L19.57 17.91 L19.95 20.57 L15.45 23.17 L13.33 21.51 L10.67 21.51 L8.55 23.17 L4.05 20.57 L4.43 17.91 L3.10 15.60 L0.60 14.60 L0.60 9.40 L3.10 8.40 L4.43 6.09 L4.05 3.43 L8.55 0.83 L10.67 2.49 L13.33 2.49 L15.45 0.83 L19.95 3.43 L19.57 6.09 Z" stroke="#4f4f4f" stroke-width="1.9" stroke-linejoin="round" fill="none"/><circle cx="12" cy="12" r="3.7" stroke="#4f4f4f" stroke-width="1.9"/></svg>
<div class="t" style="left:38.38px;top:134px;font-size:22px;color:#4d4d4d;letter-spacing:0.000px;">1</div>
<div class="t" style="left:111.39px;top:134px;font-size:22px;color:#4d4d4d;letter-spacing:-0.200px;">20220814 00:00:00</div>
<div class="t" style="left:397.46px;top:134px;font-size:22px;color:#4d4d4d;letter-spacing:0.000px;">Ali</div>
<div class="t" style="left:612.00px;top:134px;font-size:22px;color:#4d4d4d;letter-spacing:0.000px;">L1</div>
<div class="t" style="left:827.50px;top:134px;font-size:22px;color:#4d4d4d;letter-spacing:0.000px;">Plain</div>
<div class="t" style="left:1044.48px;top:134px;font-size:22px;color:#4d4d4d;letter-spacing:0.000px;">Center</div>
<div class="t" style="left:1259.90px;top:134px;font-size:22px;color:#4d4d4d;letter-spacing:0.000px;">Hunan</div>
<div class="t" style="left:1476.58px;top:134px;font-size:22px;color:#4d4d4d;letter-spacing:0.000px;">Changsha</div>
<div class="t" style="left:1692.46px;top:134px;font-size:22px;color:#4d4d4d;letter-spacing:0.000px;">Office</div>
<div class="t" style="left:1907.60px;top:134px;font-size:22px;color:#4d4d4d;letter-spacing:0.000px;">Paper</div>
<div class="t" style="left:2137.50px;top:134px;font-size:22px;color:#4d4d4d;letter-spacing:0.000px;">K</div>
<div class="t" style="left:38.68px;top:192px;font-size:22px;color:#4d4d4d;letter-spacing:0.000px;">2</div>
<div class="t" style="left:111.39px;top:192px;font-size:22px;color:#4d4d4d;letter-spacing:-0.200px;">20230701 00:00:00</div>
<div class="t" style="left:397.46px;top:192px;font-size:22px;color:#4d4d4d;letter-spacing:0.000px;">Ali</div>
<div class="t" style="left:612.00px;top:192px;font-size:22px;color:#4d4d4d;letter-spacing:0.000px;">L2</div>
<div class="t" style="left:827.50px;top:192px;font-size:22px;color:#4d4d4d;letter-spacing:0.000px;">Plain</div>
<div class="t" style="left:1044.48px;top:192px;font-size:22px;color:#4d4d4d;letter-spacing:0.000px;">Center</div>
<div class="t" style="left:1259.90px;top:192px;font-size:22px;color:#4d4d4d;letter-spacing:0.000px;">Hubei</div>
<div class="t" style="left:1477.21px;top:192px;font-size:22px;color:#4d4d4d;letter-spacing:0.000px;">Xiaogan</div>
<div class="t" style="left:1691.70px;top:192px;font-size:22px;color:#4d4d4d;letter-spacing:0.000px;">Furniture</div>
<div class="t" style="left:1907.60px;top:192px;font-size:22px;color:#4d4d4d;letter-spacing:0.000px;">Decorator</div>
<div class="t" style="left:2137.50px;top:192px;font-size:22px;color:#4d4d4d;letter-spacing:0.000px;">K</div>
<div class="t" style="left:38.75px;top:249px;font-size:22px;color:#4d4d4d;letter-spacing:0.000px;">3</div>
<div class="t" style="left:111.39px;top:249px;font-size:22px;color:#4d4d4d;letter-spacing:-0.200px;">20200727 00:00:00</div>
<div class="t" style="left:397.46px;top:249px;font-size:22px;color:#4d4d4d;letter-spacing:0.000px;">Ali</div>
<div class="t" style="left:612.76px;top:249px;font-size:22px;color:#4d4d4d;letter-spacing:0.000px;">Others</div>
<div class="t" style="left:827.50px;top:249px;font-size:22px;color:#4d4d4d;letter-spacing:0.000px;">Plain</div>
<div class="t" style="left:1043.80px;top:249px;font-size:22px;color:#4d4d4d;letter-spacing:0.000px;">East</div>
<div class="t" style="left:1261.00px;top:249px;font-size:22px;color:#4d4d4d;letter-spacing:0.000px;">Zhejiang</div>
<div class="t" style="left:1476.66px;top:249px;font-size:22px;color:#4d4d4d;letter-spacing:0.000px;">Quzhou</div>
<div class="t" style="left:1692.46px;top:249px;font-size:22px;color:#4d4d4d;letter-spacing:0.000px;">Office</div>
<div class="t" style="left:1907.97px;top:249px;font-size:22px;color:#4d4d4d;letter-spacing:0.000px;">undefined</div>
<div class="t" style="left:2137.50px;top:249px;font-size:22px;color:#4d4d4d;letter-spacing:0.000px;">K</div>
<div class="t" style="left:38.75px;top:307px;font-size:22px;color:#4d4d4d;letter-spacing:0.000px;">4</div>
<div class="t" style="left:111.39px;top:307px;font-size:22px;color:#4d4d4d;letter-spacing:-0.200px;">20210520 00:00:00</div>
<div class="t" style="left:397.46px;top:307px;font-size:22px;color:#4d4d4d;letter-spacing:0.000px;">Ali</div>
<div class="t" style="left:612.00px;top:307px;font-size:22px;color:#4d4d4d;letter-spacing:0.000px;">L2</div>
<div class="t" style="left:827.50px;top:307px;font-size:22px;color:#4d4d4d;letter-spacing:0.000px;">Plain</div>
<div class="t" style="left:1043.80px;top:307px;font-size:22px;color:#4d4d4d;letter-spacing:0.000px;">East</div>
<div class="t" style="left:1261.36px;top:307px;font-size:22px;color:#4d4d4d;letter-spacing:0.000px;">Jiangxi</div>
<div class="t" style="left:1475.90px;top:307px;font-size:22px;color:#4d4d4d;letter-spacing:0.000px;">Fuzhou</div>
<div class="t" style="left:1693.01px;top:307px;font-size:22px;color:#4d4d4d;letter-spacing:0.000px;">Technique</div>
<div class="t" style="left:1909.36px;top:307px;font-size:22px;color:#4d4d4d;letter-spacing:0.000px;">Accessory</div>
<div class="t" style="left:2137.50px;top:307px;font-size:22px;color:#4d4d4d;letter-spacing:0.000px;">K</div>
<div class="t" style="left:38.70px;top:364px;font-size:22px;color:#4d4d4d;letter-spacing:0.000px;">5</div>
<div class="t" style="left:111.39px;top:364px;font-size:22px;color:#4d4d4d;letter-spacing:-0.200px;">20230601 00:00:00</div>
<div class="t" style="left:397.46px;top:364px;font-size:22px;color:#4d4d4d;letter-spacing:0.000px;">Ali</div>
<div class="t" style="left:612.00px;top:364px;font-size:22px;color:#4d4d4d;letter-spacing:0.000px;">L2</div>
<div class="t" style="left:827.50px;top:364px;font-size:22px;color:#4d4d4d;letter-spacing:0.000px;">Plain</div>
<div class="t" style="left:1043.80px;top:364px;font-size:22px;color:#4d4d4d;letter-spacing:0.000px;">East</div>
<div class="t" style="left:1261.00px;top:364px;font-size:22px;color:#4d4d4d;letter-spacing:0.000px;">Zhejiang</div>
<div class="t" style="left:1477.60px;top:364px;font-size:22px;color:#4d4d4d;letter-spacing:0.000px;">Wenzhou</div>
<div class="t" style="left:1692.46px;top:364px;font-size:22px;color:#4d4d4d;letter-spacing:0.000px;">Office</div>
<div class="t" style="left:1907.60px;top:364px;font-size:22px;color:#4d4d4d;letter-spacing:0.000px;">Box</div>
<div class="t" style="left:2137.50px;top:364px;font-size:22px;color:#4d4d4d;letter-spacing:0.000px;">K</div>
<div class="t" style="left:38.61px;top:422px;font-size:22px;color:#4d4d4d;letter-spacing:0.000px;">6</div>
<div class="t" style="left:111.39px;top:422px;font-size:22px;color:#4d4d4d;letter-spacing:-0.200px;">20230122 00:00:00</div>
<div class="t" style="left:397.46px;top:422px;font-size:22px;color:#4d4d4d;letter-spacing:0.000px;">Ali</div>
<div class="t" style="left:612.76px;top:422px;font-size:22px;color:#4d4d4d;letter-spacing:0.000px;">Others</div>
<div class="t" style="left:827.50px;top:422px;font-size:22px;color:#4d4d4d;letter-spacing:0.000px;">Plain</div>
<div class="t" style="left:1043.80px;top:422px;font-size:22px;color:#4d4d4d;letter-spacing:0.000px;">North</div>
<div class="t" style="left:1260.70px;top:422px;font-size:22px;color:#4d4d4d;letter-spacing:0.000px;">Shanxi</div>
<div class="t" style="left:1477.21px;top:422px;font-size:22px;color:#4d4d4d;letter-spacing:0.000px;">Taiyuan</div>
<div class="t" style="left:1692.46px;top:422px;font-size:22px;color:#4d4d4d;letter-spacing:0.000px;">Office</div>
<div class="t" style="left:1907.60px;top:422px;font-size:22px;color:#4d4d4d;letter-spacing:0.000px;">Box</div>
<div class="t" style="left:2137.50px;top:422px;font-size:22px;color:#4d4d4d;letter-spacing:0.000px;">K</div>
<div class="t" style="left:38.67px;top:479px;font-size:22px;color:#4d4d4d;letter-spacing:0.000px;">7</div>
<div class="t" style="left:111.39px;top:479px;font-size:22px;color:#4d4d4d;letter-spacing:-0.200px;">20230717 00:00:00</div>
<div class="t" style="left:397.46px;top:479px;font-size:22px;color:#4d4d4d;letter-spacing:0.000px;">Ali</div>
<div class="t" style="left:612.76px;top:479px;font-size:22px;color:#4d4d4d;letter-spacing:0.000px;">Others</div>
<div class="t" style="left:827.50px;top:479px;font-size:22px;color:#4d4d4d;letter-spacing:0.000px;">Plain</div>
<div class="t" style="left:1043.80px;top:479px;font-size:22px;color:#4d4d4d;letter-spacing:0.000px;">North</div>
<div class="t" style="left:1259.90px;top:479px;font-size:22px;color:#4d4d4d;letter-spacing:0.000px;">Beijing</div>
<div class="t" style="left:1475.90px;top:479px;font-size:22px;color:#4d4d4d;letter-spacing:0.000px;">Beijing</div>
<div class="t" style="left:1692.46px;top:479px;font-size:22px;color:#4d4d4d;letter-spacing:0.000px;">Office</div>
<div class="t" style="left:1907.60px;top:479px;font-size:22px;color:#4d4d4d;letter-spacing:0.000px;">Label</div>
<div class="t" style="left:2137.50px;top:479px;font-size:22px;color:#4d4d4d;letter-spacing:0.000px;">K</div>
<div class="t" style="left:38.68px;top:537px;font-size:22px;color:#4d4d4d;letter-spacing:0.000px;">8</div>
<div class="t" style="left:111.39px;top:537px;font-size:22px;color:#4d4d4d;letter-spacing:-0.200px;">20231103 00:00:00</div>
<div class="t" style="left:397.46px;top:537px;font-size:22px;color:#4d4d4d;letter-spacing:0.000px;">Ali</div>
<div class="t" style="left:612.00px;top:537px;font-size:22px;color:#4d4d4d;letter-spacing:0.000px;">L2</div>
<div class="t" style="left:827.50px;top:537px;font-size:22px;color:#4d4d4d;letter-spacing:0.000px;">Plain</div>
<div class="t" style="left:1043.80px;top:537px;font-size:22px;color:#4d4d4d;letter-spacing:0.000px;">North</div>
<div class="t" style="left:1261.21px;top:537px;font-size:22px;color:#4d4d4d;letter-spacing:0.000px;">Tianjin</div>
<div class="t" style="left:1477.21px;top:537px;font-size:22px;color:#4d4d4d;letter-spacing:0.000px;">Tianjin</div>
<div class="t" style="left:1691.70px;top:537px;font-size:22px;color:#4d4d4d;letter-spacing:0.000px;">Furniture</div>
<div class="t" style="left:1907.60px;top:537px;font-size:22px;color:#4d4d4d;letter-spacing:0.000px;">Decorator</div>
<div class="t" style="left:2137.50px;top:537px;font-size:22px;color:#4d4d4d;letter-spacing:0.000px;">K</div>
<div class="t" style="left:38.69px;top:594px;font-size:22px;color:#4d4d4d;letter-spacing:0.000px;">9</div>
<div class="t" style="left:111.39px;top:594px;font-size:22px;color:#4d4d4d;letter-spacing:-0.200px;">20230508 00:00:00</div>
<div class="t" style="left:397.46px;top:594px;font-size:22px;color:#4d4d4d;letter-spacing:0.000px;">Ali</div>
<div class="t" style="left:612.76px;top:594px;font-size:22px;color:#4d4d4d;letter-spacing:0.000px;">Others</div>
<div class="t" style="left:827.50px;top:594px;font-size:22px;color:#4d4d4d;letter-spacing:0.000px;">Plain</div>
<div class="t" style="left:1043.80px;top:594px;font-size:22px;color:#4d4d4d;letter-spacing:0.000px;">Northeast</div>
<div class="t" style="left:1259.90px;top:594px;font-size:22px;color:#4d4d4d;letter-spacing:0.000px;">Liaoning</div>
<div class="t" style="left:1477.00px;top:594px;font-size:22px;color:#4d4d4d;letter-spacing:0.000px;">Zhaoyang</div>
<div class="t" style="left:1691.70px;top:594px;font-size:22px;color:#4d4d4d;letter-spacing:0.000px;">Furniture</div>
<div class="t" style="left:1907.60px;top:594px;font-size:22px;color:#4d4d4d;letter-spacing:0.000px;">Decorator</div>
<div class="t" style="left:2137.50px;top:594px;font-size:22px;color:#4d4d4d;letter-spacing:0.000px;">K</div>
<div class="t" style="left:32.16px;top:652px;font-size:22px;color:#4d4d4d;letter-spacing:0.000px;">10</div>
<div class="t" style="left:111.39px;top:652px;font-size:22px;color:#4d4d4d;letter-spacing:-0.200px;">20240227 00:00:00</div>
<div class="t" style="left:397.46px;top:652px;font-size:22px;color:#4d4d4d;letter-spacing:0.000px;">Ali</div>
<div class="t" style="left:612.00px;top:652px;font-size:22px;color:#4d4d4d;letter-spacing:0.000px;">L2</div>
<div class="t" style="left:827.50px;top:652px;font-size:22px;color:#4d4d4d;letter-spacing:0.000px;">Plain</div>
<div class="t" style="left:1043.80px;top:652px;font-size:22px;color:#4d4d4d;letter-spacing:0.000px;">Northeast</div>
<div class="t" style="left:1259.90px;top:652px;font-size:22px;color:#4d4d4d;letter-spacing:0.000px;">Heilongjiang</div>
<div class="t" style="left:1476.70px;top:652px;font-size:22px;color:#4d4d4d;letter-spacing:0.000px;">Shuangyashan</div>
<div class="t" style="left:1692.46px;top:652px;font-size:22px;color:#4d4d4d;letter-spacing:0.000px;">Office</div>
<div class="t" style="left:1907.60px;top:652px;font-size:22px;color:#4d4d4d;letter-spacing:0.000px;">Paper</div>
<div class="t" style="left:2137.50px;top:652px;font-size:22px;color:#4d4d4d;letter-spacing:0.000px;">K</div>
<div class="t" style="left:32.26px;top:710px;font-size:22px;color:#4d4d4d;letter-spacing:0.000px;">11</div>
<div class="t" style="left:111.39px;top:710px;font-size:22px;color:#4d4d4d;letter-spacing:-0.200px;">20200428 00:00:00</div>
<div class="t" style="left:397.46px;top:710px;font-size:22px;color:#4d4d4d;letter-spacing:0.000px;">Ali</div>
<div class="t" style="left:612.00px;top:710px;font-size:22px;color:#4d4d4d;letter-spacing:0.000px;">L3</div>
<div class="t" style="left:827.50px;top:710px;font-size:22px;color:#4d4d4d;letter-spacing:0.000px;">Plain</div>
<div class="t" style="left:1043.80px;top:710px;font-size:22px;color:#4d4d4d;letter-spacing:0.000px;">Northwest</div>
<div class="t" style="left:1260.70px;top:710px;font-size:22px;color:#4d4d4d;letter-spacing:0.000px;">Shanxi</div>
<div class="t" style="left:1475.90px;top:710px;font-size:22px;color:#4d4d4d;letter-spacing:0.000px;">Baoji</div>
<div class="t" style="left:1691.70px;top:710px;font-size:22px;color:#4d4d4d;letter-spacing:0.000px;">Furniture</div>
<div class="t" style="left:1907.60px;top:710px;font-size:22px;color:#4d4d4d;letter-spacing:0.000px;">Decorator</div>
<div class="t" style="left:2137.50px;top:710px;font-size:22px;color:#4d4d4d;letter-spacing:0.000px;">K</div>
<div class="t" style="left:32.28px;top:767px;font-size:22px;color:#4d4d4d;letter-spacing:0.000px;">12</div>
<div class="t" style="left:111.39px;top:767px;font-size:22px;color:#4d4d4d;letter-spacing:-0.200px;">20230120 00:00:00</div>
<div class="t" style="left:397.46px;top:767px;font-size:22px;color:#4d4d4d;letter-spacing:0.000px;">Ali</div>
<div class="t" style="left:612.00px;top:767px;font-size:22px;color:#4d4d4d;letter-spacing:0.000px;">L1</div>
<div class="t" style="left:827.50px;top:767px;font-size:22px;color:#4d4d4d;letter-spacing:0.000px;">Plain</div>
<div class="t" style="left:1043.80px;top:767px;font-size:22px;color:#4d4d4d;letter-spacing:0.000px;">Northwest</div>
<div class="t" style="left:1260.70px;top:767px;font-size:22px;color:#4d4d4d;letter-spacing:0.000px;">Shanxi</div>
<div class="t" style="left:1475.90px;top:767px;font-size:22px;color:#4d4d4d;letter-spacing:0.000px;">Baoji</div>
<div class="t" style="left:1692.46px;top:767px;font-size:22px;color:#4d4d4d;letter-spacing:0.000px;">Office</div>
<div class="t" style="left:1907.60px;top:767px;font-size:22px;color:#4d4d4d;letter-spacing:0.000px;">Pen</div>
<div class="t" style="left:2137.50px;top:767px;font-size:22px;color:#4d4d4d;letter-spacing:0.000px;">K</div>
<div class="t" style="left:32.21px;top:825px;font-size:22px;color:#4d4d4d;letter-spacing:0.000px;">13</div>
<div class="t" style="left:111.39px;top:825px;font-size:22px;color:#4d4d4d;letter-spacing:-0.200px;">20230216 00:00:00</div>
<div class="t" style="left:397.46px;top:825px;font-size:22px;color:#4d4d4d;letter-spacing:0.000px;">Ali</div>
<div class="t" style="left:612.00px;top:825px;font-size:22px;color:#4d4d4d;letter-spacing:0.000px;">L2</div>
<div class="t" style="left:827.50px;top:825px;font-size:22px;color:#4d4d4d;letter-spacing:0.000px;">Plain</div>
<div class="t" style="left:1044.60px;top:825px;font-size:22px;color:#4d4d4d;letter-spacing:0.000px;">South</div>
<div class="t" style="left:1260.59px;top:825px;font-size:22px;color:#4d4d4d;letter-spacing:0.000px;">Guangdong</div>
<div class="t" style="left:1477.22px;top:825px;font-size:22px;color:#4d4d4d;letter-spacing:0.000px;">Yangjiang</div>
<div class="t" style="left:1691.70px;top:825px;font-size:22px;color:#4d4d4d;letter-spacing:0.000px;">Furniture</div>
<div class="t" style="left:1907.60px;top:825px;font-size:22px;color:#4d4d4d;letter-spacing:0.000px;">Decorator</div>
<div class="t" style="left:2137.50px;top:825px;font-size:22px;color:#4d4d4d;letter-spacing:0.000px;">K</div>
<div class="t" style="left:32.05px;top:882px;font-size:22px;color:#4d4d4d;letter-spacing:0.000px;">14</div>
<div class="t" style="left:111.39px;top:882px;font-size:22px;color:#4d4d4d;letter-spacing:-0.200px;">20230224 00:00:00</div>
<div class="t" style="left:397.46px;top:882px;font-size:22px;color:#4d4d4d;letter-spacing:0.000px;">Ali</div>
<div class="t" style="left:612.76px;top:882px;font-size:22px;color:#4d4d4d;letter-spacing:0.000px;">Others</div>
<div class="t" style="left:827.50px;top:882px;font-size:22px;color:#4d4d4d;letter-spacing:0.000px;">Plain</div>
<div class="t" style="left:1044.60px;top:882px;font-size:22px;color:#4d4d4d;letter-spacing:0.000px;">South</div>
<div class="t" style="left:1260.59px;top:882px;font-size:22px;color:#4d4d4d;letter-spacing:0.000px;">Guangdong</div>
<div class="t" style="left:1475.90px;top:882px;font-size:22px;color:#4d4d4d;letter-spacing:0.000px;">Foshan</div>
<div class="t" style="left:1692.46px;top:882px;font-size:22px;color:#4d4d4d;letter-spacing:0.000px;">Office</div>
<div class="t" style="left:1907.60px;top:882px;font-size:22px;color:#4d4d4d;letter-spacing:0.000px;">Paper</div>
<div class="t" style="left:2137.50px;top:882px;font-size:22px;color:#4d4d4d;letter-spacing:0.000px;">K</div>
</div>
<div class="a" style="left:559px;top:1173px;width:2151px;height:2px;background:#e9ebef"></div>
<div class="a" style="left:538px;top:1175px;width:2186px;height:61px;background:#fcfcfd"></div>
<div class="t" style="left:558.51px;top:1201px;font-size:22px;color:#555555;letter-spacing:-0.165px;">Total number of fields</div>
<div class="t" style="left:773.69px;top:1201px;font-size:22px;color:#1f1f1f;letter-spacing:-2.690px;">21</div>
<div class="a" style="left:819.5px;top:1194px;width:1.5px;height:34px;background:#e0e0e0"></div>
<div class="a" style="left:864px;top:1204px;width:14px;height:14px;background:#5b8ff9;border-radius:2px"></div>
<div class="t" style="left:885.30px;top:1201px;font-size:22px;color:#555555;letter-spacing:-0.212px;">Dimension</div>
<div class="t" style="left:995.12px;top:1201px;font-size:22px;color:#1f1f1f;letter-spacing:-0.828px;">13</div>
<div class="a" style="left:1069px;top:1204px;width:15px;height:14px;background:#3ac569;border-radius:2px"></div>
<div class="t" style="left:1090.10px;top:1201px;font-size:22px;color:#555555;letter-spacing:-0.219px;">Measure</div>
<div class="t" style="left:1181.34px;top:1201px;font-size:22px;color:#1f1f1f;letter-spacing:0.000px;">8</div>
<div class="t" style="left:2333.30px;top:1201px;font-size:22px;color:#8c8c8c;letter-spacing:-0.041px;">Preview up to the first 100 rows of data</div>
</body></html>
